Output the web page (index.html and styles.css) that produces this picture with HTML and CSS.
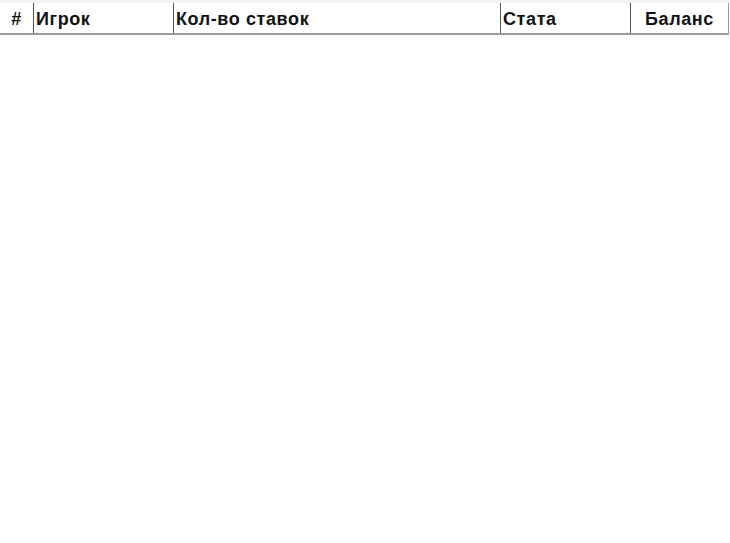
FILE: index.html
```html
<!DOCTYPE html>
<html lang="ru">
<head>
  <meta charset="UTF-8" />
  <title>Игроки</title>
  <link rel="stylesheet" href="styles.css">
</head>
<body>

<table class="players">
  <thead>
    <tr>
      <th class="col-num">#</th>
      <th class="col-player">Игрок</th>
      <th class="col-bets">Кол-во ставок</th>
      <th class="col-stat">Стата</th>
      <th class="col-balance">Баланс</th>
    </tr>
  </thead>
  <tbody id="player-list"></tbody>
</table>

</body>
</html>
```

FILE: styles.css
```css
body {
  font-family: 'Liberation Sans', Arial, sans-serif;
  background-color: white;
  margin: 0;
  padding: 0;
}

.players {
  width: 729px;
  border-collapse: collapse;
  border-top: 3px solid #f2f2f2;
  border-bottom: 2px solid #999;
  border-right: 1px solid #999;
  table-layout: fixed;
}

.players th {
  height: 28px;
  padding: 2px 2px 0;
  font-size: 18px;
  font-weight: bold;
  letter-spacing: 0.6px;
  color: #111;
  text-align: left;
  border-left: 1px solid #555;
  vertical-align: middle;
}

.players th.col-num {
  border-left: none;
  text-align: center;
  width: 29px;
}

.col-player { width: 135px; }
.col-bets { width: 322px; }
.col-stat { width: 125px; }

.players th.col-balance {
  text-align: center;
}
```
